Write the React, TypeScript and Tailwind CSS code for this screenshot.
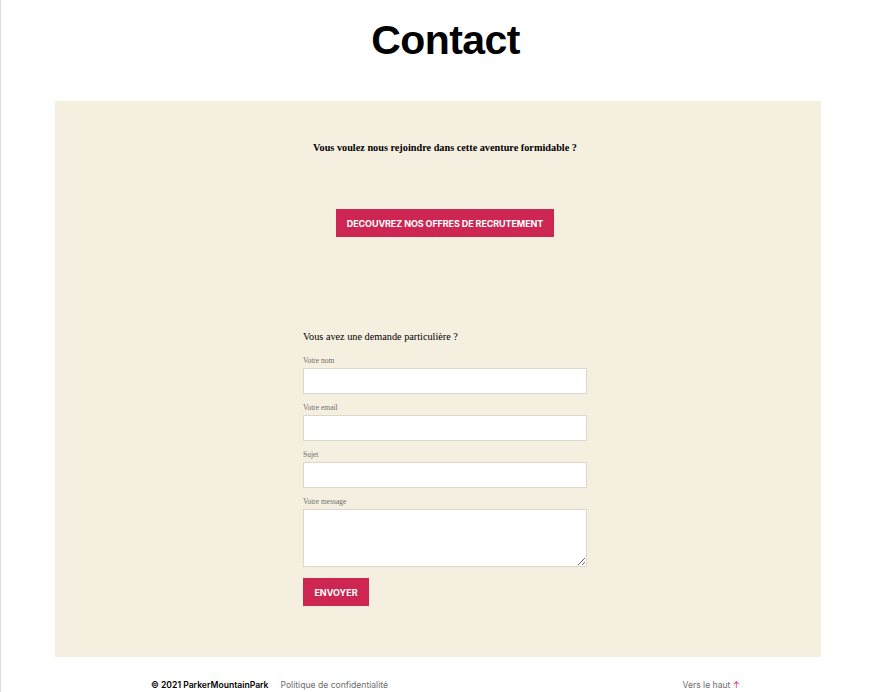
import React from "react";

const serif = { fontFamily: '"Liberation Serif", "Times New Roman", serif' };

function Field({ label, area }: { label: string; area?: boolean }) {
  return (
    <div className="flex flex-col">
      <label className="text-[7.5px] leading-[9px] text-[#6d6d6d] mb-[3px]" style={serif}>
        {label}
      </label>
      {area ? (
        <textarea className="w-[284px] h-[58px] bg-white border border-[#dcd7ca] resize-y outline-none" />
      ) : (
        <input className="w-[284px] h-[26px] bg-white border border-[#dcd7ca] outline-none" />
      )}
    </div>
  );
}

export default function App() {
  return (
    <div className="w-[874px] h-[692px] overflow-hidden bg-white border-l border-[#dcdcdc] relative font-['Inter','Liberation_Sans',sans-serif]">
      <div className="flex justify-center pt-[16px] pl-[16px]">
        <h1 className="text-[41px] leading-[48px] font-extrabold tracking-[-0.6px] text-black font-['Liberation_Sans',Arial,sans-serif]">
          Contact
        </h1>
      </div>
      <div className="ml-[54px] mt-[37px] w-[766px] h-[556px] bg-[#f5efe0] flex flex-col items-center pl-[14px]">
        <p className="mt-[39px] text-[10.25px] font-bold text-black" style={serif}>
          Vous voulez nous rejoindre dans cette aventure formidable ?
        </p>
        <button className="mt-[54px] w-[218px] h-[28px] bg-[#cd2653] text-white text-[9px] font-bold font-['Inter','Liberation_Sans',sans-serif] tracking-[-0.1px]">
          DECOUVREZ NOS OFFRES DE RECRUTEMENT
        </button>
        <div className="mt-[93px] w-[284px] flex flex-col">
          <p className="text-[10.25px] leading-[14px] text-black mb-[12px]" style={serif}>
            Vous avez une demande particulière ?
          </p>
          <div className="flex flex-col gap-[9px]">
            <Field label="Votre nom" />
            <Field label="Votre email" />
            <Field label="Sujet" />
            <Field label="Votre message" area />
          </div>
          <button className="mt-[11px] w-[66px] h-[28px] bg-[#cd2653] text-white text-[9px] font-bold font-['Inter','Liberation_Sans',sans-serif]">
            ENVOYER
          </button>
        </div>
      </div>
      <div className="flex justify-between items-center pl-[150px] pr-[134px] mt-[22px] text-[8.6px]">
        <div className="flex gap-[12px] items-center">
          <span className="font-semibold text-[#000000]">© 2021 ParkerMountainPark</span>
          <span className="text-[#6d6d6d]">Politique de confidentialité</span>
        </div>
        <span className="text-[#6d6d6d]">
          Vers le haut <span className="text-[#cd2653]">↑</span>
        </span>
      </div>
    </div>
  );
}
